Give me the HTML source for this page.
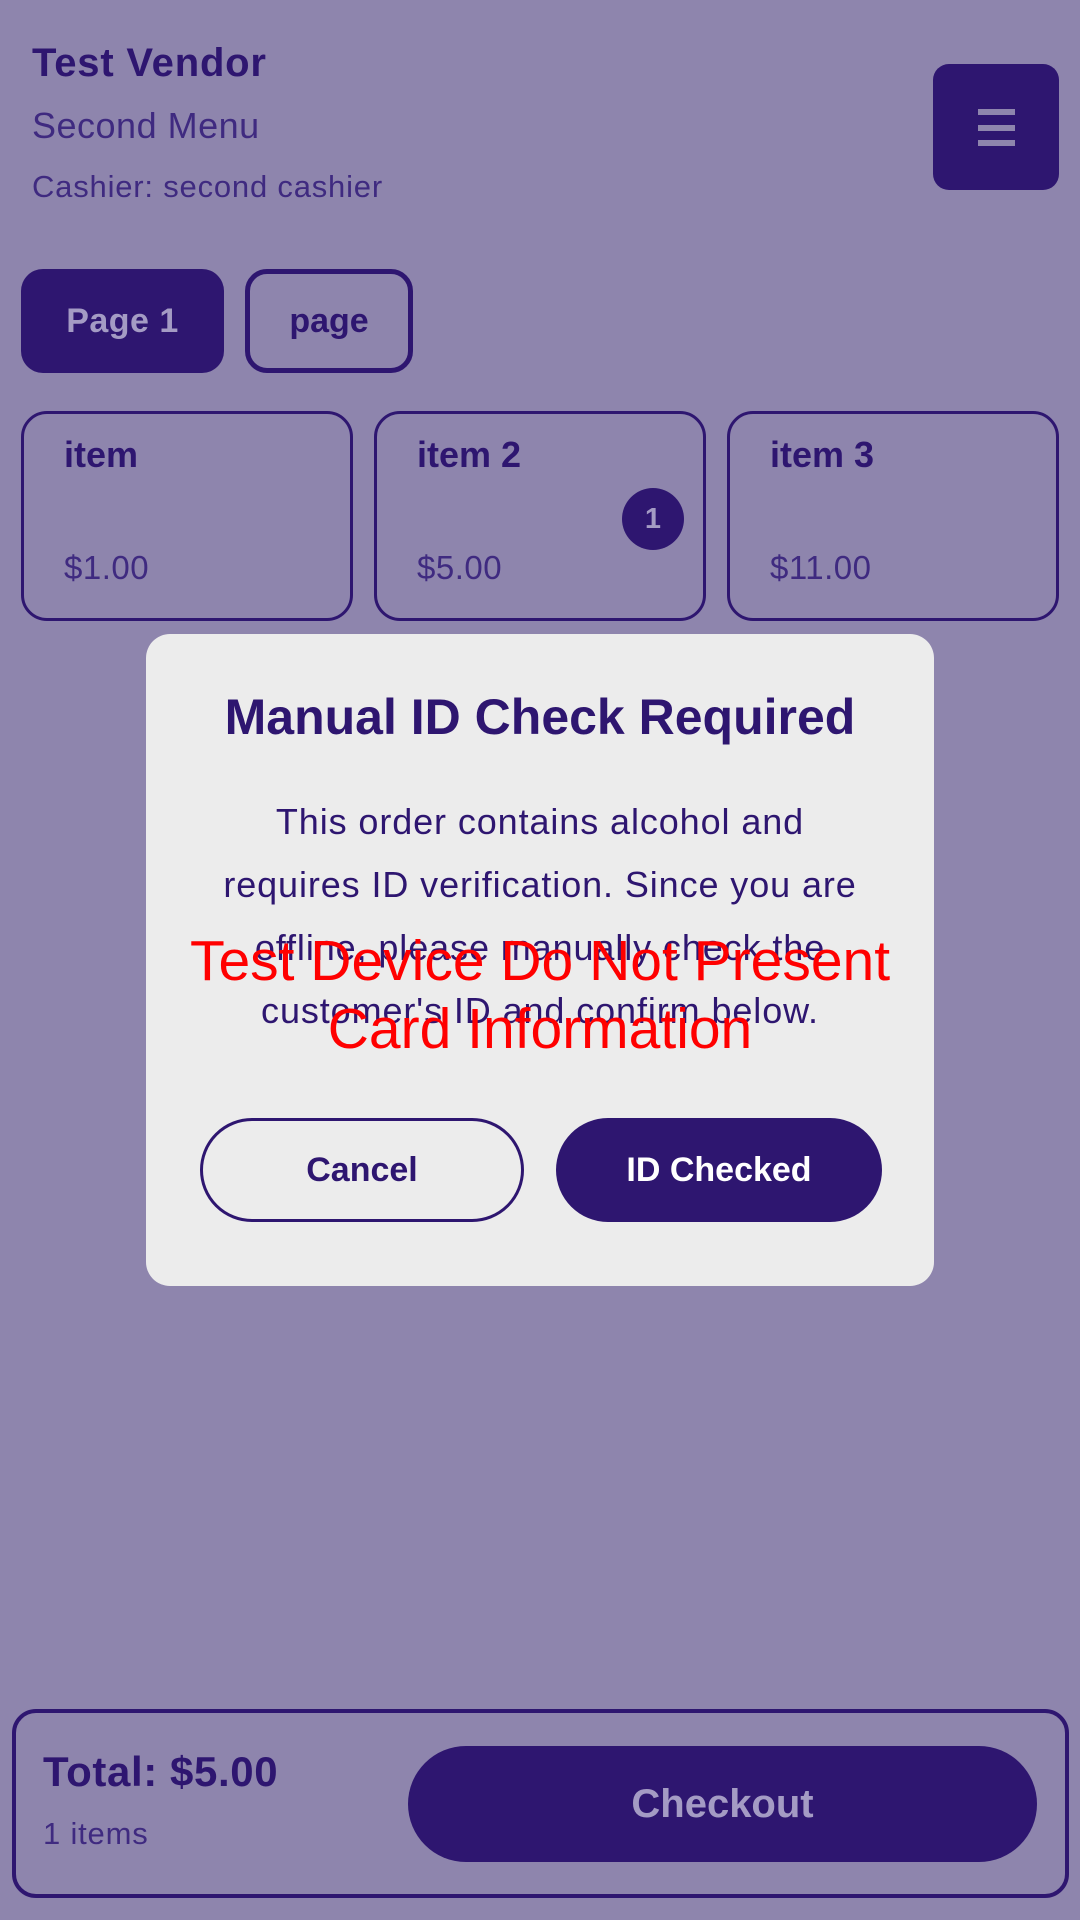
<!DOCTYPE html>
<html><head><meta charset="utf-8"><style>
*{margin:0;padding:0;box-sizing:border-box}
body{width:1080px;height:1920px;background:#8e85ad;font-family:"Liberation Sans",Roboto,sans-serif;position:relative;overflow:hidden;color:#2e1670}
.a{position:absolute}
.card{position:absolute;top:411px;width:332px;height:210px;border:3px solid #2e1670;border-radius:26px}
.card .n{position:absolute;left:40px;top:20px;font-size:36px;font-weight:bold}
.card .p{position:absolute;left:40px;top:135px;font-size:33px;color:#3f2a80;letter-spacing:0.5px}
.line{position:absolute;left:45px;width:37px;height:6px;background:#8e85ad}
.body{position:absolute;left:146px;width:788px;text-align:center;font-size:36px;color:#2e1670;letter-spacing:0.9px}
.red{position:absolute;left:0;width:1080px;text-align:center;color:#ff0000;font-size:57px}
</style></head><body>
<div class="a" style="left:32px;top:41px;font-size:40px;font-weight:bold;letter-spacing:0.8px">Test Vendor</div>
<div class="a" style="left:32px;top:105px;font-size:36px;color:#3f2a80;letter-spacing:0.5px">Second Menu</div>
<div class="a" style="left:32px;top:169px;font-size:31px;color:#3f2a80;letter-spacing:0.8px">Cashier: second cashier</div>
<div class="a" style="left:933px;top:64px;width:126px;height:126px;background:#2e1670;border-radius:16px">
<div class="line" style="top:45px"></div><div class="line" style="top:61px"></div><div class="line" style="top:76px"></div></div>
<div class="a" style="left:21px;top:269px;width:203px;height:104px;background:#2e1670;border-radius:22px;color:#a49bc4;font-size:34px;font-weight:bold;text-align:center;line-height:104px;letter-spacing:0.5px">Page 1</div>
<div class="a" style="left:245px;top:269px;width:168px;height:104px;border:5px solid #2e1670;border-radius:22px;font-size:34px;font-weight:bold;text-align:center;line-height:94px">page</div>
<div class="card" style="left:21px"><div class="n">item</div><div class="p">$1.00</div></div>
<div class="card" style="left:374px"><div class="n">item 2</div><div class="p">$5.00</div>
<div style="position:absolute;left:245px;top:74px;width:62px;height:62px;border-radius:50%;background:#2e1670;color:#a49bc4;font-weight:bold;font-size:29px;text-align:center;line-height:62px">1</div></div>
<div class="card" style="left:727px"><div class="n">item 3</div><div class="p">$11.00</div></div>
<div class="a" style="left:146px;top:634px;width:788px;height:652px;background:#ececec;border-radius:24px"></div>
<div class="a" style="left:146px;top:688px;width:788px;text-align:center;font-size:50px;font-weight:bold">Manual ID Check Required</div>
<div class="body" style="top:801px">This order contains alcohol and</div>
<div class="body" style="top:864px">requires ID verification. Since you are</div>
<div class="body" style="top:927px">offline, please manually check the</div>
<div class="body" style="top:990px">customer's ID and confirm below.</div>
<div class="a" style="left:200px;top:1118px;width:324px;height:104px;border:3px solid #2e1670;border-radius:52px;font-size:34px;font-weight:bold;text-align:center;line-height:98px">Cancel</div>
<div class="a" style="left:556px;top:1118px;width:326px;height:104px;background:#2e1670;border-radius:52px;font-size:34px;font-weight:bold;text-align:center;line-height:104px;color:#fff">ID Checked</div>
<div class="red" style="top:928px">Test Device Do Not Present</div>
<div class="red" style="top:996px">Card Information</div>
<div class="a" style="left:12px;top:1709px;width:1057px;height:189px;border:4px solid #2e1670;border-radius:24px"></div>
<div class="a" style="left:43px;top:1748px;font-size:42px;font-weight:bold;letter-spacing:0.6px">Total: $5.00</div>
<div class="a" style="left:43px;top:1816px;font-size:31px;color:#3f2a80;letter-spacing:0.8px">1 items</div>
<div class="a" style="left:408px;top:1746px;width:629px;height:116px;background:#2e1670;border-radius:58px;color:#a49bc4;font-size:40px;font-weight:bold;text-align:center;line-height:116px">Checkout</div>
</body></html>
